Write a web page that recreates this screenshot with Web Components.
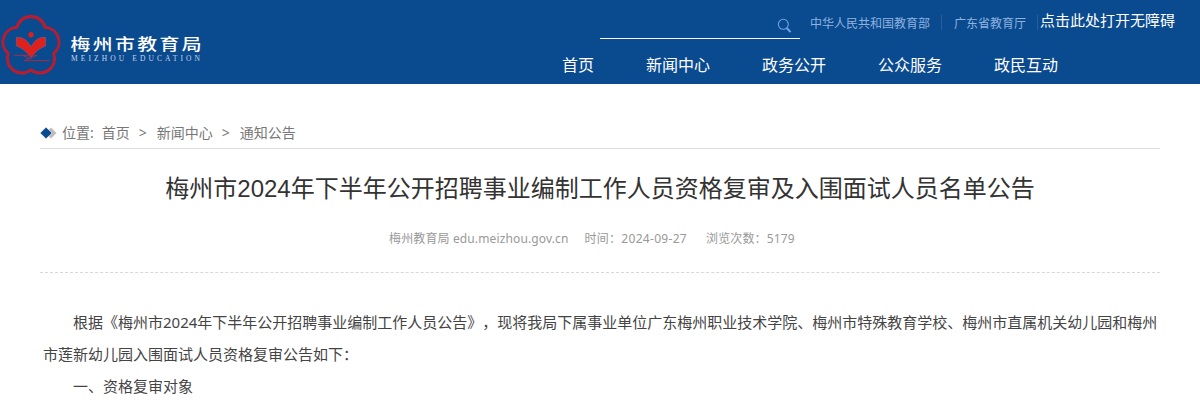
<!DOCTYPE html>
<html lang="zh-CN">
<head>
<meta charset="utf-8">
<title>梅州市教育局</title>
<style>
  body {
    margin: 0;
    background: #fff;
    font-family: "Noto Sans", "Noto Sans CJK SC", sans-serif;
    text-spacing-trim: space-all;
    overflow: hidden;
  }
</style>
</head>
<body>
<site-header>
  <site-logo slot="logo"></site-logo>
  <search-box slot="tools"></search-box>
  <top-link slot="tools">中华人民共和国教育部</top-link>
  <top-link slot="tools">广东省教育厅</top-link>
  <top-link slot="tools" class="access">点击此处打开无障碍</top-link>
  <nav-item slot="nav">首页</nav-item>
  <nav-item slot="nav">新闻中心</nav-item>
  <nav-item slot="nav">政务公开</nav-item>
  <nav-item slot="nav">公众服务</nav-item>
  <nav-item slot="nav">政民互动</nav-item>
</site-header>
<bread-crumb>
  <span>首页</span>
  <span>新闻中心</span>
  <span>通知公告</span>
</bread-crumb>
<news-article>
  <span slot="title">梅州市2024年下半年公开招聘事业编制工作人员资格复审及入围面试人员名单公告</span>
  <span slot="source">梅州教育局 edu.meizhou.gov.cn</span>
  <span slot="date">时间：2024-09-27</span>
  <span slot="views">浏览次数：5179</span>
  <article-text>根据《梅州市2024年下半年公开招聘事业编制工作人员公告》，现将我局下属事业单位广东梅州职业技术学院、梅州市特殊教育学校、梅州市直属机关幼儿园和梅州市莲新幼儿园入围面试人员资格复审公告如下：</article-text>
  <article-text>一、资格复审对象</article-text>
</news-article>

<script>
class SiteHeader extends HTMLElement {
  constructor() {
    super();
    this.attachShadow({ mode: 'open' });
    this.shadowRoot.innerHTML = `
    <style>
      :host {
        display: flex;
        height: 84px;
        background: #0a4a8f;
      }

      .right {
        flex: 1;
      }

      .tools {
        display: flex;
        height: 39px;
        margin-left: 396px;
      }

      nav {
        display: flex;
        gap: 52px;
        padding: 11px 0 0 358px;
      }
    </style>
    <slot name="logo"></slot>
    <div class="right">
      <div class="tools"><slot name="tools"></slot></div>
      <nav><slot name="nav"></slot></nav>
    </div>
    `;
  }
}

class SiteLogo extends HTMLElement {
  constructor() {
    super();
    this.attachShadow({ mode: 'open' });
    this.shadowRoot.innerHTML = `
    <style>
      :host {
        display: block;
        width: 204px;
        height: 84px;
      }

      svg {
        display: block;
      }
    </style>
    <svg width="204" height="84" viewBox="0 0 204 84">
      <g fill="none" stroke-linejoin="round">
        <path stroke="#c81a26" stroke-width="2.9" d="M16.9 27.3A14.6 14.6 0 0 1 45.1 27.3A14.8 14.8 0 0 1 53.8 53.4A14.6 14.6 0 0 1 31 69.8A14.6 14.6 0 0 1 8.2 53.4A14.8 14.8 0 0 1 16.9 27.3Z"/>
        <path stroke="#8a2549" stroke-width=".5" d="M16.9 27.3A14.6 14.6 0 0 1 45.1 27.3A14.8 14.8 0 0 1 53.8 53.4A14.6 14.6 0 0 1 31 69.8A14.6 14.6 0 0 1 8.2 53.4A14.8 14.8 0 0 1 16.9 27.3Z"/>
      </g>
      <circle cx="31" cy="34.8" r="2.7" fill="#d8201f"/>
      <path fill="#e0201b" stroke="#76618d" stroke-width=".6" d="M16.4 37.3Q26 36.5 31 47Q36 36.5 45.6 37.3V46Q37 49 31 57.5Q25 49 16.4 46Z"/>
      <path fill="none" stroke="#b52b3d" stroke-width=".9" d="M14 55.3H37L24 60.7H49.5M24 56L31 59"/>
      <text transform="translate(70.5 50) scale(1.24 1)" fill="#fff" font-family="Noto Sans CJK SC, sans-serif" font-size="16" font-weight="500" letter-spacing="1.95">梅州市教育局</text>
      <text x="71" y="61.3" font-family="Liberation Serif, serif" font-size="7.5" textLength="129" fill="#c8d6e8">MEIZHOU EDUCATION</text>
    </svg>
    `;
  }
}

class SearchBox extends HTMLElement {
  constructor() {
    super();
    this.attachShadow({ mode: 'open' });
    this.shadowRoot.innerHTML = `
    <style>
      :host {
        display: flex;
        justify-content: flex-end;
        box-sizing: border-box;
        width: 200px;
        height: 39px;
        margin-right: 10px;
        padding: 18px 7px 0 0;
        border-bottom: 1px solid #fff;
      }
    </style>
    <svg width="16" height="16" viewBox="0 0 16 16" fill="none" stroke="#6fa3e3">
      <circle cx="6.3" cy="6.3" r="5" stroke-width="1.1"/>
      <path d="M9.8 10L13.5 14.2" stroke-width="2"/>
    </svg>
    `;
  }
}

class TopLink extends HTMLElement {
  constructor() {
    super();
    this.attachShadow({ mode: 'open' });
    this.shadowRoot.innerHTML = `
    <style>
      :host {
        display: block;
        height: 15px;
        margin: 15px 12px 0 0;
        padding-right: 11px;
        border-right: 1px solid #285f9d;
        color: #8fb3df;
        font-size: 12px;
        line-height: 17px;
        white-space: nowrap;
      }

      :host(.access) {
        margin: 12px 0 0 -10px;
        padding: 0;
        border: 0;
        color: #fff;
        font-size: 15px;
      }
    </style>
    <slot></slot>
    `;
  }
}

class NavItem extends HTMLElement {
  constructor() {
    super();
    this.attachShadow({ mode: 'open' });
    this.shadowRoot.innerHTML = `
    <style>
      :host {
        display: block;
        color: #fff;
        font-size: 16px;
        line-height: 30px;
      }
    </style>
    <slot></slot>
    `;
  }
}

class BreadCrumb extends HTMLElement {
  constructor() {
    super();
    this.attachShadow({ mode: 'open' });
    this.shadowRoot.innerHTML = `
    <style>
      :host {
        display: flex;
        align-items: center;
        height: 30px;
        margin: 34px 40px 0;
        border-bottom: 1px solid #ddd;
        color: #777;
        font-size: 14px;
        line-height: 30px;
      }

      svg {
        margin-right: 5px;
      }

      ::slotted(span) {
        margin-left: 8px;
      }

      ::slotted(span:not(:last-child))::after {
        content: ">";
        margin: 0 2px 0 9px;
      }
    </style>
    <svg width="17" height="12" viewBox="0 0 17 12">
      <path fill="#bdbdbd" d="M11 0.5L16.5 6L11 11.5L7 7.5V4.5Z"/>
      <path fill="#0a4a8f" stroke="#fff" stroke-width=".5" d="M6 0.2L12 6L6 11.8L0.2 6Z"/>
    </svg>
    <span>位置:</span>
    <slot></slot>
    `;
  }
}

class NewsArticle extends HTMLElement {
  constructor() {
    super();
    this.attachShadow({ mode: 'open' });
    this.shadowRoot.innerHTML = `
    <style>
      :host {
        display: block;
        padding: 0 40px;
      }

      h1 {
        margin: 20px 0 0;
        color: #333;
        font: 400 24px/40px "Liberation Sans", "Noto Sans CJK SC", sans-serif;
        text-align: center;
      }

      .meta {
        display: flex;
        height: 43px;
        margin-top: 20px;
        padding-left: 349px;
        border-bottom: 1px dashed #d8d8d8;
        color: #999;
        font-size: 12px;
        line-height: 20px;
      }

      slot[name="source"] {
        display: block;
        letter-spacing: .13px;
      }

      slot[name="date"] {
        display: block;
        margin: 0 19px 0 16px;
        letter-spacing: .3px;
      }

      slot[name="views"] {
        display: block;
        letter-spacing: .13px;
      }

      .content {
        padding: 33px 0 0 3px;
      }
    </style>
    <h1><slot name="title"></slot></h1>
    <div class="meta">
      <slot name="source"></slot>
      <slot name="date"></slot>
      <slot name="views"></slot>
    </div>
    <div class="content"><slot></slot></div>
    `;
  }
}

class ArticleText extends HTMLElement {
  constructor() {
    super();
    this.attachShadow({ mode: 'open' });
    this.shadowRoot.innerHTML = `
    <style>
      :host {
        display: block;
        color: #444;
        font-size: 15px;
        line-height: 32px;
        text-indent: 2em;
      }
    </style>
    <slot></slot>
    `;
  }
}

customElements.define('site-header', SiteHeader);
customElements.define('site-logo', SiteLogo);
customElements.define('search-box', SearchBox);
customElements.define('top-link', TopLink);
customElements.define('nav-item', NavItem);
customElements.define('bread-crumb', BreadCrumb);
customElements.define('news-article', NewsArticle);
customElements.define('article-text', ArticleText);
</script>
</body>
</html>
